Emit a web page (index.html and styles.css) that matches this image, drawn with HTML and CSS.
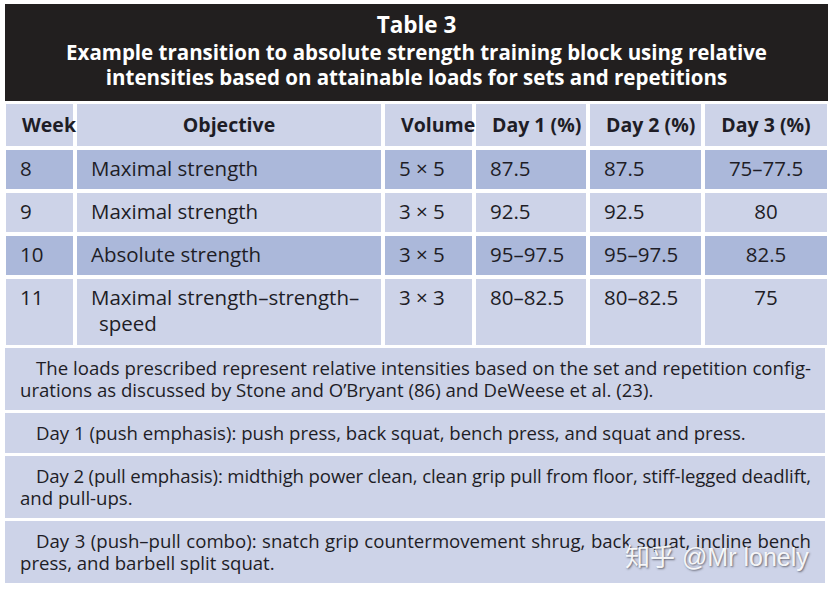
FILE: index.html
```html
<!DOCTYPE html>
<html>
<head>
<meta charset="utf-8">
<link rel="stylesheet" href="styles.css">
</head>
<body>
<div class="page">
  <div class="title-box">
    <div class="title">Table 3</div>
    <div class="subtitle">Example transition to absolute strength training block using relative<br>intensities based on attainable loads for sets and repetitions</div>
  </div>
  <div class="grid">
    <div class="cell head">Week</div>
    <div class="cell head center">Objective</div>
    <div class="cell head">Volume</div>
    <div class="cell head">Day 1 (%)</div>
    <div class="cell head">Day 2 (%)</div>
    <div class="cell head center">Day 3 (%)</div>

    <div class="cell dark">8</div>
    <div class="cell dark">Maximal strength</div>
    <div class="cell dark">5 × 5</div>
    <div class="cell dark">87.5</div>
    <div class="cell dark">87.5</div>
    <div class="cell dark center">75–77.5</div>

    <div class="cell">9</div>
    <div class="cell">Maximal strength</div>
    <div class="cell">3 × 5</div>
    <div class="cell">92.5</div>
    <div class="cell">92.5</div>
    <div class="cell center">80</div>

    <div class="cell dark">10</div>
    <div class="cell dark">Absolute strength</div>
    <div class="cell dark">3 × 5</div>
    <div class="cell dark">95–97.5</div>
    <div class="cell dark">95–97.5</div>
    <div class="cell dark center">82.5</div>

    <div class="cell tall">11</div>
    <div class="cell tall hang">Maximal strength–strength–<br><span class="indent">speed</span></div>
    <div class="cell tall">3 × 3</div>
    <div class="cell tall">80–82.5</div>
    <div class="cell tall">80–82.5</div>
    <div class="cell tall center">75</div>
  </div>
  <div class="notes">
    <div class="note">
      <div class="line first full">The loads prescribed represent relative intensities based on the set and repetition config-</div>
      <div class="line">urations as discussed by Stone and O’Bryant (86) and DeWeese et al. (23).</div>
    </div>
    <div class="note">
      <div class="line first">Day 1 (push emphasis): push press, back squat, bench press, and squat and press.</div>
    </div>
    <div class="note">
      <div class="line first full tight">Day 2 (pull emphasis): midthigh power clean, clean grip pull from floor, stiff-legged deadlift,</div>
      <div class="line">and pull-ups.</div>
    </div>
    <div class="note">
      <div class="line first full">Day 3 (push–pull combo): snatch grip countermovement shrug, back squat, incline bench</div>
      <div class="line">press, and barbell split squat.</div>
    </div>
  </div>
  <div class="watermark">知乎 @Mr lonely</div>
</div>
</body>
</html>
```
FILE: styles.css
```css
html, body {
  margin: 0;
  padding: 0;
  background: #ffffff;
}
.page {
  position: relative;
  width: 834px;
  height: 594px;
  padding: 4px 0 0 5px;
  box-sizing: border-box;
  color: #1e1d26;
  overflow: hidden;
}
.title-box {
  width: 823px;
  background: #221f1f;
  color: #ffffff;
  text-align: center;
  font-family: "Open Sans", sans-serif;
  font-weight: bold;
  padding: 6px 0 11px;
  box-sizing: border-box;
  height: 97px;
}
.title {
  font-size: 22.5px;
  line-height: 30px;
}
.subtitle {
  font-size: 20.5px;
  line-height: 25px;
}
.grid {
  display: grid;
  grid-template-columns: 67px 304px 87px 110px 111px 122px;
  grid-template-rows: 42px 39px 39px 39px 66px;
  column-gap: 4px;
  row-gap: 4px;
  margin: 3px 0 0 1px;
  font-family: "Open Sans", sans-serif;
  font-size: 20.5px;
}
.cell {
  background: #cdd3e8;
  padding: 5px 0 0 14px;
  line-height: 26px;
  white-space: nowrap;
  box-sizing: border-box;
}
.cell.dark {
  background: #abb8da;
}
.cell.head {
  font-weight: bold;
  font-size: 19.5px;
  padding-top: 8px;
  padding-left: 16px;
}
.cell.center {
  text-align: center;
  padding-left: 0;
}
.indent {
  padding-left: 8px;
}
.notes {
  display: flex;
  flex-direction: column;
  gap: 3px;
  margin-top: 3px;
  width: 820px;
  font-family: "Open Sans", sans-serif;
  font-size: 18.6px;
}
.note {
  background: #cdd3e8;
  padding: 9px 14px 9px 15px;
  line-height: 22px;
}
.line {
  white-space: nowrap;
}
.line.first {
  padding-left: 16px;
}
.line.full {
  text-align: justify;
  text-align-last: justify;
}
.line.tight {
  letter-spacing: -0.12px;
  word-spacing: -1px;
}
.watermark {
  position: absolute;
  left: 625px;
  top: 537px;
  font-family: "Liberation Sans", "Noto Sans CJK SC", sans-serif;
  font-size: 25px;
  color: rgba(255, 255, 255, 0.92);
  text-shadow: 1px 1px 2px rgba(60, 60, 70, 0.7);
}
```
